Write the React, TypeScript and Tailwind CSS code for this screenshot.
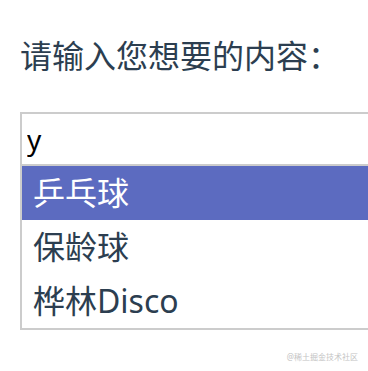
const items = ["乒乓球", "保龄球", "桦林Disco"];

export default function App() {
  return (
    <div
      className="relative w-[368px] h-[371px] overflow-hidden bg-white text-[#2c3e50]"
      style={{ fontFamily: '"Noto Sans", "Noto Sans CJK SC", sans-serif' }}
    >
      <div className="pt-[40px] pl-[20px]">
        <h2 className="text-[32px] leading-[32px] font-normal">请输入您想要的内容：</h2>
        <div className="mt-[40px] w-[420px]">
          <input
            defaultValue="y"
            className="block w-full h-[54px] border-2 border-[#cccccc] pl-[5px] text-[28px] text-black outline-none"
            style={{ fontFamily: '"Noto Sans", "Noto Sans CJK SC", sans-serif' }}
          />
          <ul className="border-2 border-t-0 border-[#cccccc]">
            {items.map((item, i) => (
              <li
                key={item}
                className={
                  i === 0
                    ? "h-[54px] pl-[11px] text-[32px] leading-[54px] bg-[#5c6bc0] text-white"
                    : "h-[54px] pl-[11px] text-[32px] leading-[54px]"
                }
              >
                {item}
              </li>
            ))}
          </ul>
        </div>
      </div>
      <div className="absolute right-[10px] bottom-[9px] text-[8px] leading-[10px] text-[#c4c4c4]">
        @稀土掘金技术社区
      </div>
    </div>
  );
}
